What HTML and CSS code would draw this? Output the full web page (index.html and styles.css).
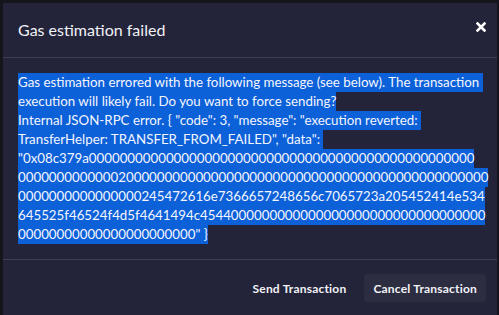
FILE: index.html
```html
<!DOCTYPE html>
<html lang="en">
	<head>
		<meta http-equiv="Content-Type" content="text/html; charset=utf-8" />
		<title>Gas estimation failed</title>
		<link rel="stylesheet" href="styles.css">
	</head>

	<body>
		<div class="modal">
			<div class="modalHeader">
				<h2 class="modalTitle">Gas estimation failed</h2>
				<button class="closeBtn" aria-label="Close">
					<svg width="10" height="10" viewBox="0 0 10 10">
						<path d="M1.5 1.5 L8.5 8.5 M8.5 1.5 L1.5 8.5" stroke="#fff" stroke-width="2.6" stroke-linecap="square"/>
					</svg>
				</button>
			</div>

			<div class="modalBody">
				<span class="line">Gas estimation errored with the following message (see below). The transaction </span>
				<span class="line">execution will likely fail. Do you want to force sending?</span>
				<span class="line">Internal JSON-RPC error. { "code": 3, "message": "execution reverted: </span>
				<span class="line">TransferHelper: TRANSFER_FROM_FAILED", "data": </span>
				<span class="line">"0x08c379a00000000000000000000000000000000000000000000000000</span>
				<span class="line">0000000000000200000000000000000000000000000000000000000000000</span>
				<span class="line">0000000000000000245472616e7366657248656c7065723a205452414e534</span>
				<span class="line">645525f46524f4d5f4641494c4544000000000000000000000000000000000</span>
				<span class="line">00000000000000000000000" }</span>
			</div>

			<div class="modalFooter">
				<button class="btn">Send Transaction</button>
				<button class="btn btnCancel">Cancel Transaction</button>
			</div>
		</div>
	</body>
</html>
```

FILE: styles.css
```css
*{
	padding:0;
	margin:0;
	box-sizing: border-box;
}
body {
	background-color: #14141d;
	font-family: Lato, "Noto Sans", sans-serif;
	color: #f2f2f7;
	padding: 3px 2px 0 3px;
	height: 315px;
	overflow: hidden;
}
.modal {
	background-color: #23243a;
	height: 312px;
}
.modalHeader {
	display: flex;
	align-items: center;
	justify-content: space-between;
	height: 55px;
	padding: 0 11px 0 15px;
	border-bottom: 1px solid #3c3d52;
}
.modalTitle {
	font-size: 16px;
	font-weight: 400;
	padding-bottom: 2px;
}
.closeBtn {
	background: none;
	border: 0;
	width: 10px;
	height: 10px;
	margin-bottom: 6px;
	display: flex;
}
.modalBody {
	padding: 15px 15px 15px 15px;
	height: 202px;
	border-bottom: 1px solid #3c3d52;
	font-size: 13.3px;
}
.line {
	display: block;
	width: fit-content;
	height: 19px;
	line-height: 19px;
	background-color: #0c60d8;
	white-space: pre;
	color: #f4f6ff;
}
.modalFooter {
	display: flex;
	justify-content: flex-end;
	gap: 9px;
	padding: 14px 11px 0 0;
}
.btn {
	font-family: Lato, "Noto Sans", sans-serif;
	font-size: 12px;
	font-weight: 700;
	letter-spacing: 0.2px;
	color: #f2f2f7;
	background: none;
	border: 0;
	border-radius: 4px;
	height: 28px;
	padding: 0 9px;
}
.btnCancel {
	background-color: #2c2d41;
}
```
